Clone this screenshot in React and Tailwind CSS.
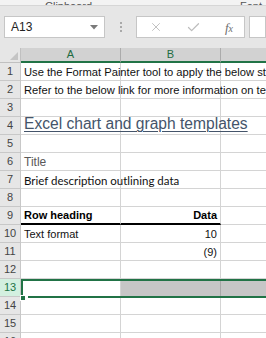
import React from "react";
import { X, Check } from "lucide-react";

const rows = [
  { n: 1, a: "Use the Format Painter tool to apply the below styles to your own data.", cls: "text-[11.2px] text-[#111]" },
  { n: 2, a: "Refer to the below link for more information on templates.", cls: "text-[11.2px] text-[#111]" },
  { n: 3 },
  { n: 4, a: "Excel chart and graph templates", cls: "text-[15.6px] text-[#44546a] underline underline-offset-2 decoration-1", link: true },
  { n: 5 },
  { n: 6, a: "Title", cls: "text-[12px] text-[#595959]" },
  { n: 7, a: "Brief description outlining data", cls: "text-[11.5px] text-[#111]", cal: true },
  { n: 8 },
  { n: 9, a: "Row heading", b: "Data", cls: "text-[11px] text-black font-semibold", heading: true },
  { n: 10, a: "Text format", b: "10", cls: "text-[11px] text-[#111]" },
  { n: 11, b: "(9)", cls: "text-[11px] text-[#111]" },
  { n: 12 },
  { n: 13, sel: true },
  { n: 14 },
  { n: 15 },
  { n: 16 },
];

function Row({ r }) {
  const rowHead = r.sel
    ? "bg-[#d3f0e0] text-[#217346]"
    : "bg-[#e6e6e6] text-[#444]";
  const cellBase = "h-[18px] border-r border-b border-[#d4d4d4] flex items-end pb-[2px] whitespace-nowrap overflow-visible";
  return (
    <div className="grid grid-cols-[21px_100px_100px_100px] h-[18px]">
      <div className={`h-[18px] border-r border-b border-[#c8c8c8] ${rowHead} flex items-center justify-center text-[11px] leading-none`}>
        {r.n}
      </div>
      <div className={`${cellBase} pl-[3px] relative z-10 ${r.heading ? "border-b-black border-b-2 h-[18px]" : ""} ${r.cls || ""}`}>
        <span className={r.link ? "leading-[16px]" : "leading-none"} style={r.cal ? { fontFamily: 'Lato, "Liberation Sans", sans-serif' } : undefined}>{r.a || ""}</span>
      </div>
      <div className={`${cellBase} justify-end pr-[3px] ${r.heading ? "border-b-black border-b-2" : ""} ${r.sel ? "bg-[#c6c6c6] border-r-[#a8a8a8]" : "bg-white"} ${r.cls || ""}`}>
        <span className="leading-none">{r.b || ""}</span>
      </div>
      <div className={`${cellBase} ${r.sel ? "bg-[#c6c6c6]" : "bg-white"}`} />
    </div>
  );
}

export default function App() {
  return (
    <div className="w-[266px] h-[338px] overflow-hidden bg-white relative" style={{ fontFamily: '"Liberation Sans", Arial, sans-serif' }}>
      {/* ribbon bottom strip */}
      <div className="h-[6px] bg-[#f3f3f3] border-b border-[#d6d6d6] flex items-end overflow-hidden text-[11px] text-[#555] leading-[12px]">
        <div className="w-[146px] shrink-0 flex items-end h-[12px] -mb-[7px] pl-[45px]"><span>Clipboard</span></div>
        <div className="w-[94px] shrink-0 flex items-end h-[12px] -mb-[7px]"><span>⌟</span></div>
        <div className="flex items-end h-[12px] -mb-[7px]"><span>Font</span></div>
      </div>
      {/* formula bar */}
      <div className="h-[42px] bg-[#e6e6e6] flex items-start pt-[10px] pl-[4px] gap-0">
        <div className="w-[101px] h-[22px] bg-white border border-[#c6c6c6] flex items-center justify-between pl-[6px] pr-[6px] text-[12px] text-[#222]">
          <span>A13</span>
          <svg width="8" height="5" viewBox="0 0 8 5"><path d="M0 0 L8 0 L4 4.5 Z" fill="#7a7a7a" /></svg>
        </div>
        <div className="w-[31px] h-[22px] flex flex-col items-center justify-center gap-[2px]">
          <div className="w-[2px] h-[2px] bg-[#a9a9a9]" />
          <div className="w-[2px] h-[2px] bg-[#a9a9a9]" />
          <div className="w-[2px] h-[2px] bg-[#a9a9a9]" />
        </div>
        <div className="w-[109px] h-[22px] bg-white border border-[#c6c6c6] flex items-center justify-between pl-[12px] pr-[11px]">
          <X size={14} strokeWidth={1.6} color="#bdbdbd" />
          <Check size={15} strokeWidth={2} color="#bdbdbd" />
          <span className="text-[13px] italic text-[#6e6e6e] leading-none" style={{ fontFamily: '"Liberation Serif", serif' }}>f<span className="text-[10px]">x</span></span>
        </div>
        <div className="ml-[4px] flex-1 h-[22px] bg-white border border-[#c6c6c6]" />
      </div>
      {/* column headers */}
      <div className="grid grid-cols-[21px_100px_100px_100px] h-[15px]">
        <div className="bg-[#e6e6e6] border-r border-b border-[#c0c0c0] relative">
          <svg className="absolute right-[2px] bottom-[2px]" width="8" height="8" viewBox="0 0 8 8"><path d="M8 0 L8 8 L0 8 Z" fill="#c4c4c4" /></svg>
        </div>
        <div className="bg-[#d2d2d2] border-r border-[#ababab] border-b-2 border-b-[#217346] flex items-center justify-center text-[11px] text-[#1e6b41] leading-none">A</div>
        <div className="bg-[#d2d2d2] border-r border-[#ababab] border-b-2 border-b-[#217346] flex items-center justify-center text-[11px] text-[#1e6b41] leading-none">B</div>
        <div className="bg-[#d2d2d2] border-r border-[#ababab] border-b-2 border-b-[#217346] flex items-center justify-center text-[11px] text-[#1e6b41] leading-none">C</div>
      </div>
      <div className="relative">
        {rows.map((r) => (
          <Row key={r.n} r={r} />
        ))}
        {/* selection overlay */}
        <div className="absolute left-[21px] top-[216px] w-[260px] h-[19px] border-2 border-[#217346] z-20 pointer-events-none" />
        <div className="absolute left-[26px] top-[233px] w-[2px] h-[2px] bg-white z-30" />
        <div className="absolute left-[20px] top-[232px] w-[6px] h-[6px] bg-[#217346] border border-white z-30" />
      </div>
    </div>
  );
}
